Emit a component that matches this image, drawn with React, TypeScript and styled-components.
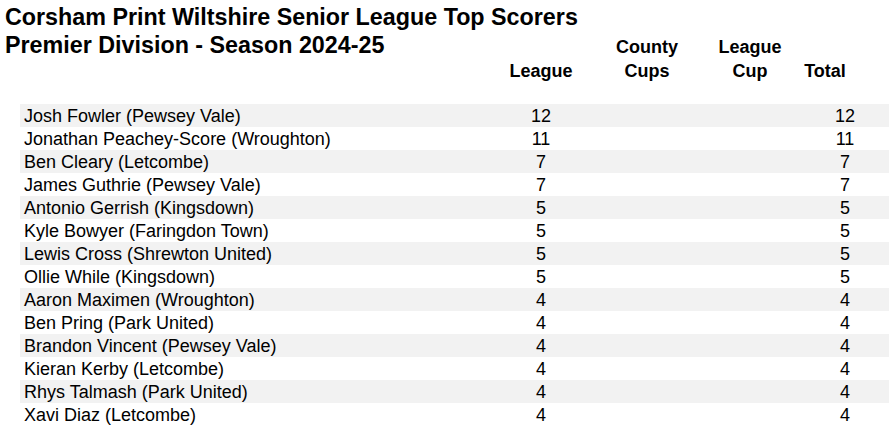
import React from "react";
import styled, { createGlobalStyle } from "styled-components";

const Global = createGlobalStyle`
  html, body { margin: 0; padding: 0; background: #fff; overflow: hidden; }
  body { font-family: "Liberation Sans", Arial, sans-serif; color: #000; }
`;

const COLS = "470px 102px 110px 96px 91px";

const Page = styled.div`
  width: 889px;
`;

const Head = styled.div`
  display: grid;
  grid-template-columns: 20px ${COLS};
  grid-template-rows: 31px 28px 24px;
  margin-bottom: 21px;
`;

const TitleLine = styled.div<{ $row: number }>`
  grid-row: ${(p) => p.$row};
  grid-column: ${(p) => (p.$row === 1 ? "1 / -1" : "1 / 3")};
  align-self: end;
  padding-left: 5px;
  font-size: 23.3px;
  line-height: 28px;
  font-weight: bold;
  white-space: nowrap;
`;

const ColHead = styled.div<{ $col: number; $shift?: number }>`
  grid-row: 2 / 4;
  grid-column: ${(p) => p.$col};
  align-self: end;
  text-align: center;
  font-size: 18px;
  line-height: 24px;
  font-weight: bold;
  padding-right: ${(p) => p.$shift ?? 0}px;
`;

const Table = styled.div`
  margin-left: 20px;
  width: 869px;
`;

const Row = styled.div<{ $striped: boolean }>`
  display: grid;
  grid-template-columns: ${COLS};
  height: 23px;
  background: ${(p) => (p.$striped ? "#f2f2f2" : "#fff")};
  font-size: 18px;
  line-height: 23px;
  padding-top: 1px;
  box-sizing: border-box;
`;

const Name = styled.div`
  padding-left: 4px;
  white-space: nowrap;
`;

const Num = styled.div<{ $shift?: number }>`
  text-align: center;
  padding-left: ${(p) => p.$shift ?? 0}px;
`;

const scorers: [string, number, number][] = [
  ["Josh Fowler (Pewsey Vale)", 12, 12],
  ["Jonathan Peachey-Score (Wroughton)", 11, 11],
  ["Ben Cleary (Letcombe)", 7, 7],
  ["James Guthrie (Pewsey Vale)", 7, 7],
  ["Antonio Gerrish (Kingsdown)", 5, 5],
  ["Kyle Bowyer (Faringdon Town)", 5, 5],
  ["Lewis Cross (Shrewton United)", 5, 5],
  ["Ollie While (Kingsdown)", 5, 5],
  ["Aaron Maximen (Wroughton)", 4, 4],
  ["Ben Pring (Park United)", 4, 4],
  ["Brandon Vincent (Pewsey Vale)", 4, 4],
  ["Kieran Kerby (Letcombe)", 4, 4],
  ["Rhys Talmash (Park United)", 4, 4],
  ["Xavi Diaz (Letcombe)", 4, 4],
];

export default function App() {
  return (
    <Page>
      <Global />
      <Head>
        <TitleLine $row={1}>Corsham Print Wiltshire Senior League Top Scorers</TitleLine>
        <TitleLine $row={2}>Premier Division - Season 2024-25</TitleLine>
        <ColHead $col={3}>League</ColHead>
        <ColHead $col={4}>
          County
          <br />
          Cups
        </ColHead>
        <ColHead $col={5}>
          League
          <br />
          Cup
        </ColHead>
        <ColHead $col={6} $shift={37}>
          Total
        </ColHead>
      </Head>
      <Table>
        {scorers.map(([name, league, total], i) => (
          <Row key={name} $striped={i % 2 === 0}>
            <Name>{name}</Name>
            <Num>{league}</Num>
            <Num />
            <Num />
            <Num $shift={3}>{total}</Num>
          </Row>
        ))}
      </Table>
    </Page>
  );
}
